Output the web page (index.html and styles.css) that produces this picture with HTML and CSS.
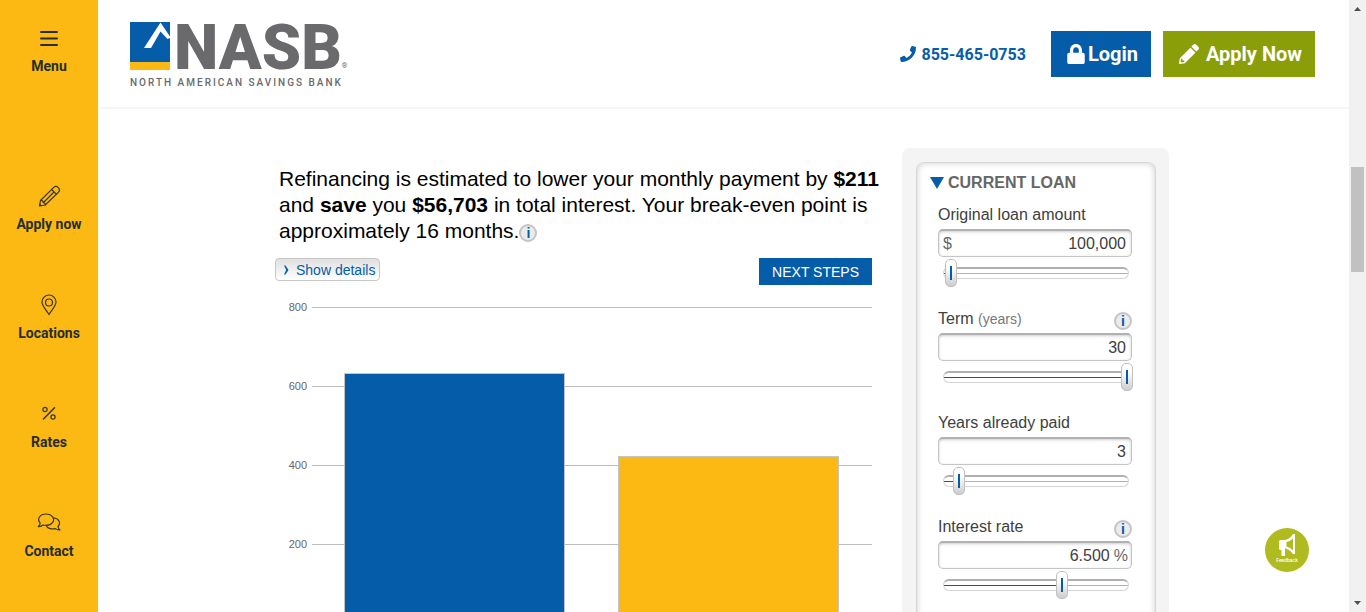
FILE: index.html
```html
<!DOCTYPE html>
<html lang="en">
<head>
<meta charset="utf-8">
<meta name="viewport" content="width=device-width, initial-scale=1">
<title>Refinance calculator | NASB</title>
<link rel="stylesheet" href="styles.css">
</head>
<body>
<div class="page">
  <nav class="sidebar" aria-label="Main">
    <button class="side-item menu" type="button">
      <svg width="18" height="24" viewBox="0 0 18 24"><path d="M1 6h16M1 12.500h16M1 19h16" stroke="#262d2b" stroke-width="2" stroke-linecap="round"/></svg>
      <span>Menu</span>
    </button>
    <a class="side-item" href="#apply">
      <svg width="24" height="24" viewBox="0 0 24 24"><g class="line"><path d="M2.500 22l1-5.500L16.500 3.600q2.500-2.300 4.800 0t0 4.800L8.200 21z"/><path d="M14.600 5.500l5 4.900M6.500 18.500l10-10M3.500 16.500q2.400-.3 2.600 2 2.300-.1 2.100 2.500M2.800 20.200l1.400 1.400"/></g></svg>
      <span>Apply now</span>
    </a>
    <a class="side-item" href="#locations">
      <svg width="24" height="24" viewBox="0 0 24 24"><g class="line"><path d="M12 21.500C8.500 16 5 12.700 5 9a7 7 0 0 1 14 0c0 3.700-3.500 7-7 12.500z"/><circle cx="12" cy="9.500" r="3.500"/></g></svg>
      <span>Locations</span>
    </a>
    <a class="side-item" href="#rates">
      <svg width="24" height="24" viewBox="0 0 24 24"><g class="line"><circle cx="8" cy="7.500" r="2.100"/><circle cx="16" cy="15" r="2.100"/><path stroke-width="1.600" d="M17.500 5.800L6.500 17"/></g></svg>
      <span>Rates</span>
    </a>
    <a class="side-item" href="#contact">
      <svg width="24" height="24" viewBox="0 0 24 24"><g class="line"><path d="M3.200 12.200C-.5 8 3 3 9 3s9.500 5 6.500 8.700C13.500 14.300 9.500 14.700 6 14q-2 1.800-4.700 1.600 1.600-1.300 1.900-3.400z"/><path d="M16.800 7c5 .3 7.500 5 4.200 8.500q.2 2 2 3.500-2.700 0-4.500-1.400c-4.500 1-8.500-.6-9.300-3.300"/></g></svg>
      <span>Contact</span>
    </a>
  </nav>

  <div class="main">
    <header class="header">
      <a class="logo" href="#home" aria-label="NASB home">
        <span class="logo-top">
          <svg class="logo-mark" viewBox="0 0 40 48"><path fill="#055da9" d="M0 0h40v40H0z"/><path fill="#fdb913" d="M0 40h40v8H0z"/><path fill="#fff" d="M30.500.5L40 14.500V16l-2.500 1-7-7.500-9.500 16.500h-7z"/></svg>
          <span class="logo-name">NASB</span>
          <span class="logo-reg">®</span>
        </span>
        <span class="logo-tag">NORTH AMERICAN SAVINGS BANK</span>
      </a>
      <div class="header-actions">
        <a class="phone" href="tel:855-465-0753">
          <svg width="16" height="16" viewBox="0 0 512 512"><path fill="currentColor" d="M493.400 24.600l-104-24c-11.300-2.600-22.900 3.300-27.500 13.900l-48 112c-4.200 9.800-1.400 21.300 6.900 28l60.600 49.600c-36 76.700-98.900 140.500-177.200 177.200l-49.600-60.600c-6.800-8.300-18.200-11.100-28-6.900l-112 48C3.900 366.500-2 378.100.6 389.400l24 104C27.100 504.200 36.700 512 48 512c256.100 0 464-207.500 464-464 0-11.200-7.700-20.900-18.600-23.400z"/></svg>
          <span>855-465-0753</span>
        </a>
        <a class="btn login" href="#login">
          <svg width="18" height="20" viewBox="0 0 448 512"><path fill="currentColor" d="M400 224h-24v-72C376 68.200 307.800 0 224 0S72 68.200 72 152v72H48c-26.500 0-48 21.500-48 48v192c0 26.500 21.500 48 48 48h352c26.500 0 48-21.500 48-48V272c0-26.500-21.500-48-48-48zm-104 0H152v-72c0-39.700 32.300-72 72-72s72 32.300 72 72v72z"/></svg>
          <span>Login</span>
        </a>
        <a class="btn apply" href="#apply">
          <svg width="20" height="20" viewBox="0 0 512 512"><path fill="currentColor" d="M497.900 142.100l-46.100 46.100c-4.700 4.700-12.300 4.700-17 0l-111-111c-4.700-4.700-4.700-12.300 0-17l46.100-46.100c18.700-18.700 49.100-18.700 67.900 0l60.100 60.100c18.800 18.700 18.800 49.100 0 67.900zM284.200 99.800L21.600 362.400.4 483.900c-2.900 16.400 11.400 30.600 27.800 27.800l121.500-21.300 262.600-262.600c4.700-4.700 4.700-12.300 0-17l-111-111c-4.800-4.700-12.400-4.700-17.100 0zM88 424h48v36.300l-64.500 11.300-31.100-31.100L51.700 376H88v48z"/></svg>
          <span>Apply Now</span>
        </a>
      </div>
    </header>

    <main class="calculator">
      <section class="results">
        <p class="summary">Refinancing is estimated to lower your monthly payment by <b>$211</b> and <b>save</b> you <b>$56,703</b> in total interest. Your break-even point is approximately 16 months.<button class="info" type="button" aria-label="About this estimate">i</button></p>
        <div class="actions">
          <button class="details" type="button"><svg width="6" height="10" viewBox="0 0 6 10"><path d="M1 .5h1.500L5.500 5l-3 4.500H1L3.200 5z" fill="#055da9"/></svg>Show details</button>
          <button class="next" type="button">NEXT STEPS</button>
        </div>
        <div class="chart">
          <ul class="scale">
            <li>800</li><li>600</li><li>400</li><li>200</li><li>0</li>
          </ul>
          <div class="bars">
            <div class="bar current" style="height: 79%"></div>
            <div class="bar refinanced" style="height: 52.700%"></div>
          </div>
        </div>
      </section>

      <aside class="panel">
        <form class="panel-body">
          <h2 class="panel-title"><svg width="14" height="12" viewBox="0 0 14 12"><path d="M0 0h14L7 12z" fill="#055da9"/></svg>CURRENT LOAN</h2>
          <div class="field">
            <div class="field-head"><label for="amount">Original loan amount</label></div>
            <div class="box"><span class="prefix">$</span><input id="amount" type="text" value="100,000"></div>
            <div class="slider"><span class="rail" style="--fill: 1%"></span><input type="range" aria-label="Original loan amount slider" min="0" max="10000000" step="1000" value="100000"></div>
          </div>
          <div class="field">
            <div class="field-head"><label for="term">Term <small>(years)</small></label><button class="info" type="button" aria-label="About term">i</button></div>
            <div class="box"><input id="term" type="text" value="30"></div>
            <div class="slider"><span class="rail" style="--fill: 100%"></span><input type="range" aria-label="Term slider" min="1" max="30" value="30"></div>
          </div>
          <div class="field">
            <div class="field-head"><label for="paid">Years already paid</label></div>
            <div class="box"><input id="paid" type="text" value="3"></div>
            <div class="slider"><span class="rail" style="--fill: 6%"></span><input type="range" aria-label="Years already paid slider" min="1" max="37" value="3"></div>
          </div>
          <div class="field">
            <div class="field-head"><label for="rate">Interest rate</label><button class="info" type="button" aria-label="About interest rate">i</button></div>
            <div class="box percent"><input id="rate" type="text" value="6.500"><span class="suffix">%</span></div>
            <div class="slider"><span class="rail" style="--fill: 63%"></span><input type="range" aria-label="Interest rate slider" min="0" max="10.250" step="0.125" value="6.500"></div>
          </div>
        </form>
      </aside>
    </main>
  </div>

  <div class="scrollbar" aria-hidden="true">
    <svg width="7" height="4" viewBox="0 0 7 4"><path d="M3.500 0L7 4H0z" fill="#505050"/></svg>
    <div class="scroll-track"><div class="scroll-thumb"></div></div>
    <svg width="7" height="4" viewBox="0 0 7 4"><path d="M3.500 4L7 0H0z" fill="#505050"/></svg>
  </div>

  <button class="feedback" type="button">
    <svg width="18" height="24" viewBox="0 0 18 24"><path fill="#fff" d="M1 8.500Q1 7 2.500 7H7v16H3.500v-6h-1Q1 17 1 15.500z"/><path fill="#fff" fill-rule="evenodd" d="M7 7q5-1 8-6h2v20h-2q-3-4-8-6zM8.500 9v4.500q4 1 6.500 4V5.500Q12 8.500 8.500 9z"/></svg>
    <span>Feedback</span>
  </button>
</div>
</body>
</html>
```

FILE: styles.css
```css
* {
  box-sizing: border-box;
}

body {
  margin: 0;
  background: #fff;
  font-family: "Liberation Sans", Arial, sans-serif;
  color: #000;
}

button,
input {
  font: inherit;
}

button {
  border: 0;
  padding: 0;
  cursor: pointer;
}

a {
  text-decoration: none;
}

.page {
  display: flex;
  height: 100vh;
  overflow: hidden;
}

/* Sidebar */

.sidebar {
  flex: none;
  display: flex;
  flex-direction: column;
  align-items: stretch;
  gap: 59px;
  width: 98px;
  padding-top: 26px;
  background: #fdb913;
}

.side-item {
  display: flex;
  flex-direction: column;
  align-items: center;
  gap: 6px;
  background: none;
  color: #262d2b;
  font: 700 14px/20px Roboto, sans-serif;
}

.side-item.menu {
  margin-bottom: 49px;
}

.line {
  fill: none;
  stroke: #3a3520;
  stroke-width: 1.2;
  stroke-linejoin: round;
  stroke-linecap: round;
}

/* Header */

.main {
  flex: 1;
  min-width: 0;
}

.header {
  display: flex;
  justify-content: space-between;
  align-items: flex-start;
  padding: 22px 34px 19px 32px;
  border-bottom: 2px solid #f5f5f5;
}

.logo {
  display: flex;
  flex-direction: column;
  gap: 7px;
  color: #6a6a6d;
  font-family: Roboto, sans-serif;
}

.logo-top {
  display: flex;
  align-items: flex-end;
  height: 48px;
}

.logo-mark {
  width: 40px;
  height: 48px;
  margin-right: 4px;
}

.logo-name {
  font-size: 63px;
  font-weight: 900;
  line-height: 44px;
}

.logo-reg {
  font-size: 7px;
  line-height: 7px;
}

.logo-tag {
  font-size: 10px;
  font-weight: 500;
  line-height: 11px;
  letter-spacing: 2px;
}

.header-actions {
  display: flex;
  align-items: center;
  gap: 12px;
  padding-top: 9px;
  font-family: Roboto, sans-serif;
  font-weight: 700;
}

.phone {
  display: flex;
  align-items: center;
  gap: 6px;
  margin-right: 13px;
  color: #055da9;
  font-size: 16px;
}

.btn {
  display: flex;
  align-items: center;
  height: 46px;
  color: #fff;
  font-size: 20px;
}

.login {
  gap: 3px;
  padding: 0 13px 0 16px;
  background: #055da9;
}

.apply {
  gap: 7px;
  padding: 0 13px 0 16px;
  background: #8a9e0a;
}

/* Calculator */

.calculator {
  display: flex;
  align-items: flex-start;
  max-width: 897px;
  margin: 0 auto;
  padding: 39px 3px 0 0;
}

.results {
  flex: 1;
  min-width: 0;
  padding-top: 18px;
}

.summary {
  margin: 0;
  padding: 0 8px 0 4px;
  font-size: 21px;
  line-height: 26px;
}

.info {
  width: 18px;
  height: 18px;
  border: 2px solid #c4c4c4;
  border-radius: 50%;
  background: #ececec;
  color: #055da9;
  font-size: 14px;
  font-weight: 700;
  line-height: 14px;
}

.summary .info {
  vertical-align: text-bottom;
}

.actions {
  display: flex;
  align-items: flex-start;
  justify-content: space-between;
  margin: 14px 30px 0 0;
}

.details {
  display: flex;
  align-items: center;
  gap: 7px;
  height: 23px;
  padding: 0 4px 0 7px;
  border: 1px solid #c8c8c8;
  border-radius: 4px;
  background: linear-gradient(#e0e0e0, #fff);
  color: #055da9;
  font-size: 14px;
}

.next {
  height: 27px;
  padding: 0 13px;
  background: #055da9;
  color: #fff;
  font-size: 14px;
}

.chart {
  display: grid;
  height: 328px;
  margin: 16px 30px 0 0;
}

.scale,
.bars {
  grid-area: 1 / 1;
}

.scale {
  display: flex;
  flex-direction: column;
  justify-content: space-between;
  margin: 0;
  padding: 0;
  list-style: none;
}

.scale li {
  display: flex;
  align-items: center;
  justify-content: flex-end;
  gap: 5px;
  padding-left: 13px;
  color: #666;
  font-size: 11px;
  line-height: 12px;
}

.scale li::after {
  content: "";
  width: calc(100% - 24px);
  height: 1px;
  background: #bdbdbd;
}

.bars {
  display: flex;
  align-items: flex-end;
  justify-content: center;
  gap: 53px;
  margin: 6px 2px 6px 37px;
}

.bar {
  width: 221px;
  border: 1px solid #c4c4c4;
}

.bar.current {
  background: #055da9;
}

.bar.refinanced {
  background: #fdb913;
}

/* Loan panel */

.panel {
  flex: none;
  width: 267px;
  padding: 14px 13px 14px 14px;
  border-radius: 8px;
  background: #f4f4f4;
}

.panel-body {
  padding: 10px 23px 40px 21px;
  border: 1px solid #d6d6d6;
  border-radius: 8px;
  background: #fff;
  box-shadow: inset 0 0 6px #ccc;
}

.panel-title {
  display: flex;
  align-items: center;
  gap: 4px;
  margin: 0 0 12px -8px;
  color: #666;
  font-size: 16px;
  line-height: 20px;
}

.field {
  display: flex;
  flex-direction: column;
  margin-bottom: 22px;
  color: #404040;
  font-size: 16px;
}

.field-head {
  display: flex;
  align-items: flex-start;
  justify-content: space-between;
  height: 21px;
  margin-bottom: 3px;
  line-height: 20px;
}

.field-head small {
  color: #777;
  font-size: 14px;
}

.field-head .info {
  align-self: flex-end;
}

.box {
  display: flex;
  align-items: center;
  height: 28px;
  padding: 0 5px 0 4px;
  border: 1px solid #c4c4c4;
  border-top: 2px solid #b0b0b0;
  border-radius: 5px;
  box-shadow: inset 0 1px 3px #ccc;
}

.box input {
  flex: 1;
  min-width: 0;
  padding: 0;
  border: 0;
  outline: 0;
  background: none;
  color: #404040;
  text-align: right;
}

.box.percent {
  gap: 4px;
  padding-right: 3px;
}

.prefix,
.suffix {
  color: #666;
}

.slider {
  display: grid;
  align-items: center;
  height: 28px;
  margin: 2px -1px 0 5px;
}

.rail,
.slider input {
  grid-area: 1 / 1;
}

.rail {
  height: 12px;
  margin-right: 4px;
  border: 1px solid #d4d4d4;
  border-top: 2px solid #b0b0b0;
  border-radius: 6px;
  background:
    linear-gradient(#055da9, #055da9) 0 50% / var(--fill) 1px no-repeat,
    linear-gradient(#b0b0b0, #b0b0b0) 0 50% / 100% 1px no-repeat;
}

.slider input {
  appearance: none;
  width: 100%;
  height: 28px;
  margin: 0;
  background: none;
}

.slider input::-webkit-slider-thumb {
  appearance: none;
  width: 12px;
  height: 28px;
  border: 1px solid #c0c0c0;
  border-radius: 5px;
  background:
    linear-gradient(#055da9, #055da9) center / 2px 14px no-repeat,
    linear-gradient(#fff 30%, #ccc);
}

/* Page scrollbar */

.scrollbar {
  flex: none;
  display: flex;
  flex-direction: column;
  align-items: center;
  width: 17px;
  padding: 7px 0;
  background: #f1f1f1;
}

.scroll-track {
  flex: 1;
  padding-top: 156px;
}

.scroll-thumb {
  width: 13px;
  height: 105px;
  background: #c1c1c1;
}

/* Floating feedback button */

.feedback {
  position: fixed;
  right: 57px;
  bottom: 40px;
  display: flex;
  flex-direction: column;
  align-items: center;
  width: 44px;
  height: 44px;
  padding-top: 5px;
  border-radius: 50%;
  background: #b0bb1f;
  color: #fff;
  font: 500 5px/6px Roboto, sans-serif;
}
```
